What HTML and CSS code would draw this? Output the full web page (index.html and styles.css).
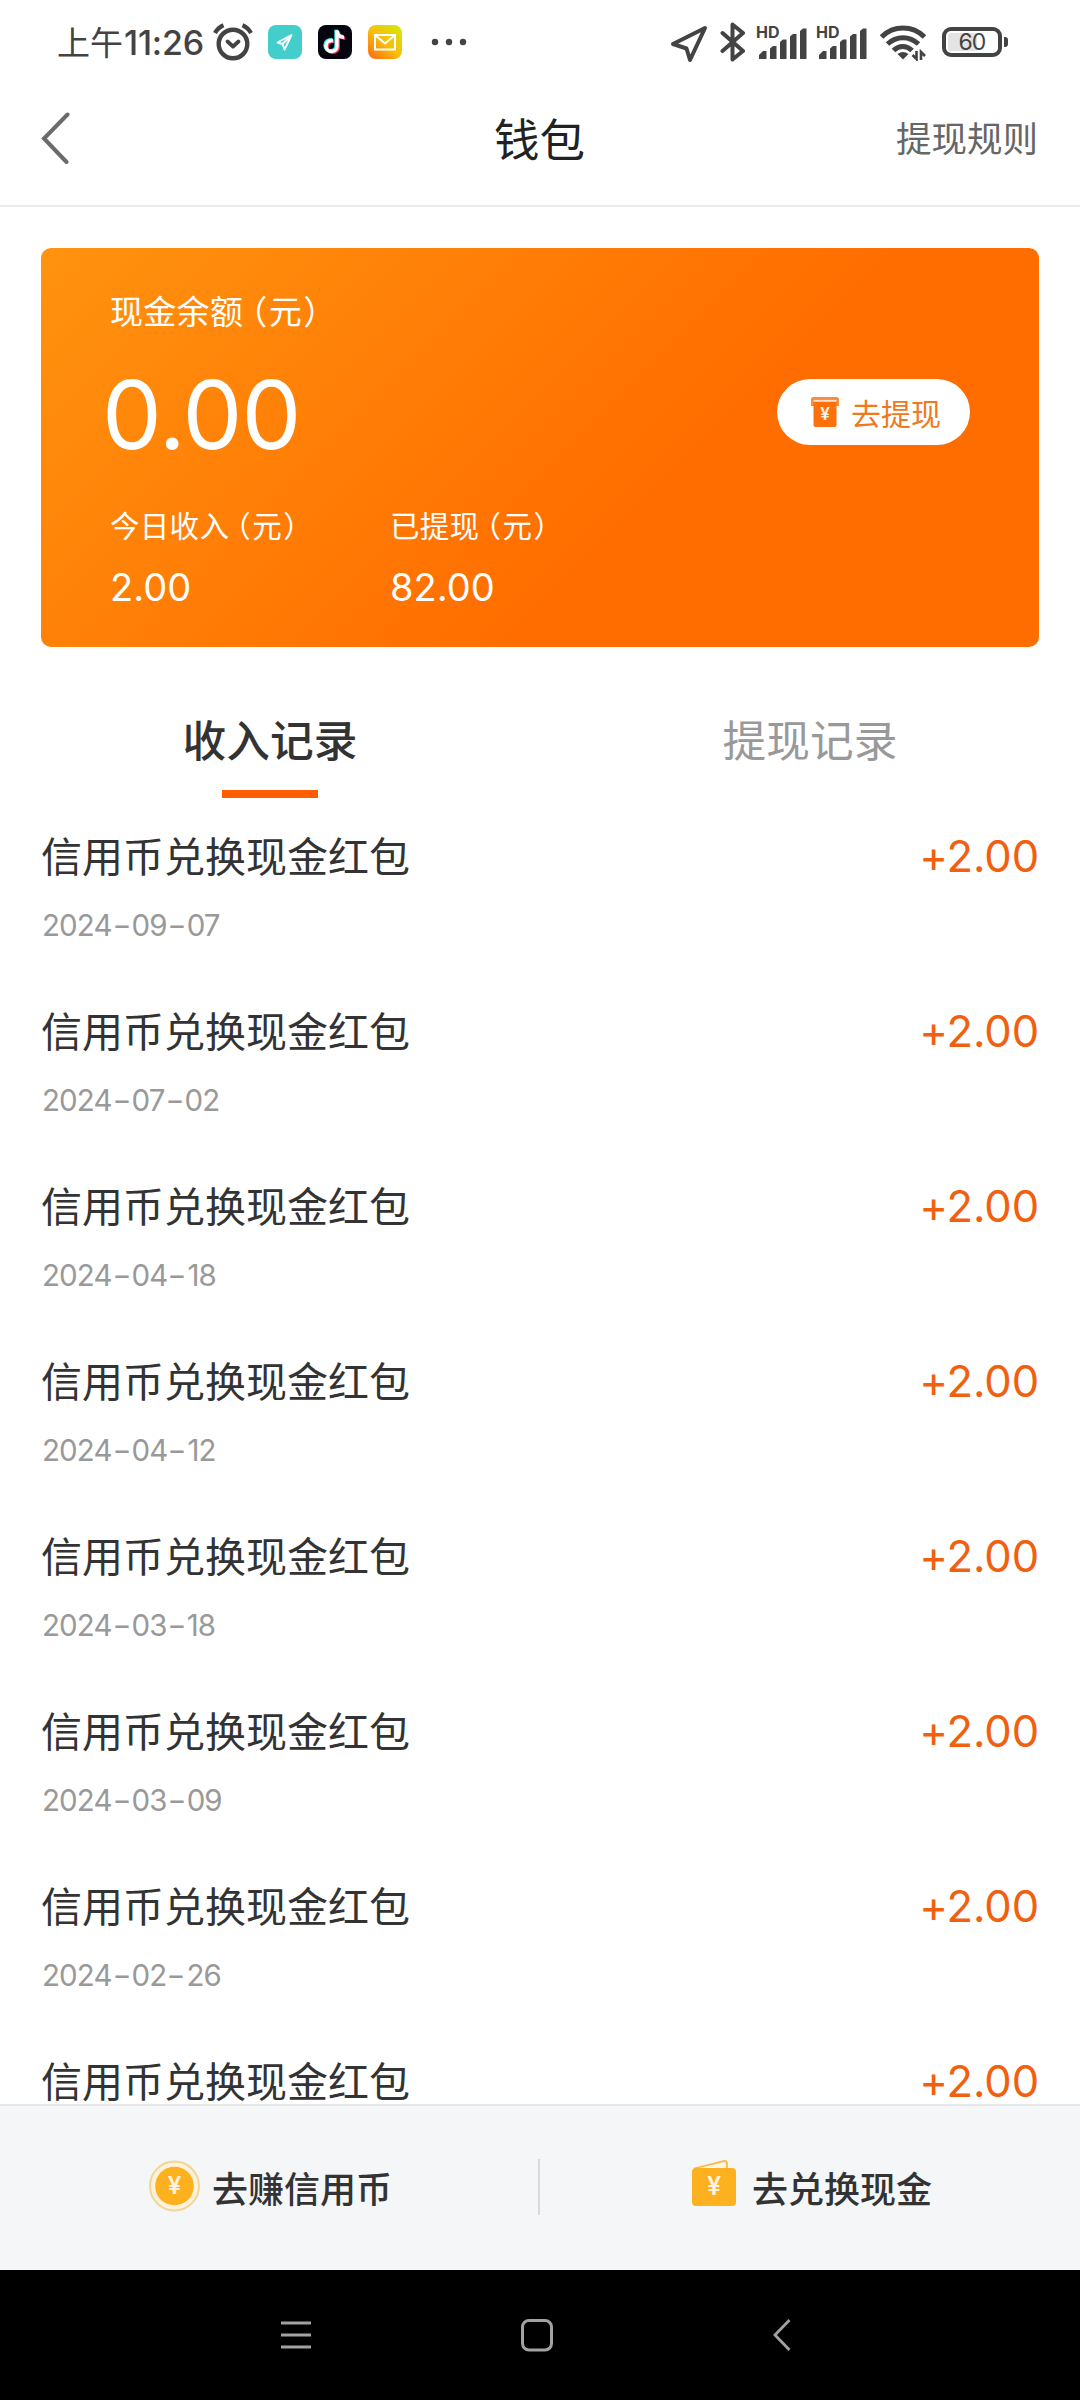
FILE: index.html
```html
<!DOCTYPE html>
<html lang="zh-CN">
<head>
<meta charset="utf-8">
<title>钱包</title>
<link rel="stylesheet" href="styles.css">
</head>
<body>
<div class="screen">
  <div class="status">
    <span class="clock"><span class="clock-cn">上午</span>11:26</span>
    <svg class="alarm" width="40" height="38" viewBox="0 0 40 38" fill="none" stroke="#434343" stroke-linecap="round">
      <circle cx="20" cy="21" r="14.300" stroke-width="4.400"/>
      <path d="M14.500 18.500l5.500 5 5.500-5" stroke-width="3.800" stroke-linejoin="round"/>
      <path d="M2 10q3-5.500 8.500-7.800M38 10q-3-5.500-8.500-7.800" stroke-width="4.200" stroke-linecap="butt"/>
    </svg>
    <svg class="app" width="34" height="34" viewBox="0 0 34 34">
      <rect width="34" height="34" rx="8" fill="#43cecb"/>
      <path d="M23.500 10L9.500 17.500l5 1.500 2 5.500zM14.500 19l9-9" fill="none" stroke="#fff" stroke-width="1.900" stroke-linejoin="round"/>
    </svg>
    <svg class="app" width="34" height="34" viewBox="0 0 34 34">
      <rect width="34" height="34" rx="8" fill="#050510"/>
      <g fill="none" stroke-width="3.400">
        <path d="M15 15.500c-4.500-.500-7 2.200-7 5.500s2.500 5.500 5.500 5.500c3.500 0 5.500-2.500 5.500-5.500V5.500c.500 4 3 6.800 7 6.800" transform="translate(-1 -.8)" stroke="#38e4e4"/>
        <path d="M15 15.500c-4.500-.500-7 2.200-7 5.500s2.500 5.500 5.500 5.500c3.500 0 5.500-2.500 5.500-5.500V5.500c.500 4 3 6.800 7 6.800" transform="translate(1.200 .9)" stroke="#f4386a"/>
        <path d="M15 15.500c-4.500-.500-7 2.200-7 5.500s2.500 5.500 5.500 5.500c3.500 0 5.500-2.500 5.500-5.500V5.500c.500 4 3 6.800 7 6.800" stroke="#fff"/>
      </g>
    </svg>
    <svg class="app" width="34" height="34" viewBox="0 0 34 34">
      <defs><linearGradient id="mail" x1="0" y1="1" x2=".9" y2="0"><stop offset="0" stop-color="#fa6414"/><stop offset=".5" stop-color="#f9bd0a"/><stop offset="1" stop-color="#d4e80a"/></linearGradient></defs>
      <rect width="34" height="34" rx="8" fill="url(#mail)"/>
      <path d="M7 10h20v14.500H7zM7.500 10.500l9.500 8 9.500-8" fill="none" stroke="#fff" stroke-width="2"/>
    </svg>
    <svg class="more" width="36" height="8" viewBox="0 0 36 8" fill="#434343"><circle cx="4" cy="4" r="3.200"/><circle cx="18" cy="4" r="3.200"/><circle cx="32" cy="4" r="3.200"/></svg>
    <svg class="locate" width="38" height="38" viewBox="0 0 38 38"><path d="M35 3L3 19l13.500 4.500L20 35z" fill="none" stroke="#434343" stroke-width="4" stroke-linejoin="round"/></svg>
    <svg class="bluetooth" width="26" height="40" viewBox="0 0 26 40"><path d="M2.500 11L23 29 12.500 37.500V2.500L23 11 2.500 29" fill="none" stroke="#434343" stroke-width="4" stroke-linejoin="round" stroke-linecap="round"/></svg>
    <div class="signal">
      <span class="hd">HD</span>
      <svg width="49" height="31" viewBox="0 0 49 31" fill="#434343"><path d="M0 31v-4l4-4h3.500v8zM11 31V20.500l3-2.500h3.500v13zM21 31V14l3-2.500h3.500V31zM31 31V8.500L34 6h3.500v25zM41 31V3l3-2.500h3.500V31z"/></svg>
    </div>
    <div class="signal">
      <span class="hd">HD</span>
      <svg width="49" height="31" viewBox="0 0 49 31" fill="#434343"><path d="M0 31v-4l4-4h3.500v8zM11 31V20.500l3-2.500h3.500v13zM21 31V14l3-2.500h3.500V31zM31 31V8.500L34 6h3.500v25zM41 31V3l3-2.500h3.500V31z"/></svg>
    </div>
    <svg class="wifi" width="46" height="36" viewBox="0 0 46 36">
      <path d="M1.500 12c12-12 31-12 43 0M7.500 19c9-8.500 22-8.500 31 0M13.500 25.500c5.500-5.500 13-5.500 18.500 0" fill="none" stroke="#434343" stroke-width="5"/>
      <path d="M17.500 29q5.500-4 11 0L23 34.500z" fill="#434343"/>
      <path d="M36.500 26v8l-4-4M41 35v-8l4 4" fill="none" stroke="#434343" stroke-width="2.600"/>
    </svg>
    <div class="battery"><span class="battery-text">60</span></div>
    <span class="nub"></span>
  </div>

  <header class="header">
    <svg class="back" width="30" height="52" viewBox="0 0 30 52"><path d="M26.500 2.500L3 26.500l22.500 23.500" fill="none" stroke="#6b6b6b" stroke-width="4" stroke-linecap="round"/></svg>
    <h1 class="title">钱包</h1>
    <a class="rules">提现规则</a>
  </header>

  <section class="card">
    <p class="label big">现金余额<span class="unit">（元）</span></p>
    <div class="balance">
      <span class="amount-main">0.00</span>
      <button class="withdraw">
        <svg width="30" height="31" viewBox="0 0 30 31">
          <path d="M1 10V3.500Q1 1 3.500 1h23Q29 1 29 3.500V10z" fill="#f98c3c"/>
          <path d="M3.500 4.800h23" stroke="#ffe3cc" stroke-width="1.800"/>
          <path d="M3.500 6h23v23q0 2-2 2h-19q-2 0-2-2z" fill="#fd700c"/>
          <text x="15" y="23.500" text-anchor="middle" class="yen" font-size="17">¥</text>
        </svg>
        去提现
      </button>
    </div>
    <div class="stats">
      <div class="stat"><p class="label">今日收入<span class="unit">（元）</span></p><p class="value">2.00</p></div>
      <div class="stat"><p class="label">已提现<span class="unit">（元）</span></p><p class="value">82.00</p></div>
    </div>
  </section>

  <nav class="tabs">
    <a class="tab active">收入记录</a>
    <a class="tab">提现记录</a>
  </nav>

  <ul class="list">
    <li class="row"><div class="line"><span class="name">信用币兑换现金红包</span><span class="plus">+2.00</span></div><time class="date">2024<span class="dash">-</span>09<span class="dash">-</span>07</time></li>
    <li class="row"><div class="line"><span class="name">信用币兑换现金红包</span><span class="plus">+2.00</span></div><time class="date">2024<span class="dash">-</span>07<span class="dash">-</span>02</time></li>
    <li class="row"><div class="line"><span class="name">信用币兑换现金红包</span><span class="plus">+2.00</span></div><time class="date">2024<span class="dash">-</span>04<span class="dash">-</span>18</time></li>
    <li class="row"><div class="line"><span class="name">信用币兑换现金红包</span><span class="plus">+2.00</span></div><time class="date">2024<span class="dash">-</span>04<span class="dash">-</span>12</time></li>
    <li class="row"><div class="line"><span class="name">信用币兑换现金红包</span><span class="plus">+2.00</span></div><time class="date">2024<span class="dash">-</span>03<span class="dash">-</span>18</time></li>
    <li class="row"><div class="line"><span class="name">信用币兑换现金红包</span><span class="plus">+2.00</span></div><time class="date">2024<span class="dash">-</span>03<span class="dash">-</span>09</time></li>
    <li class="row"><div class="line"><span class="name">信用币兑换现金红包</span><span class="plus">+2.00</span></div><time class="date">2024<span class="dash">-</span>02<span class="dash">-</span>26</time></li>
    <li class="row"><div class="line"><span class="name">信用币兑换现金红包</span><span class="plus">+2.00</span></div></li>
  </ul>

  <footer class="actions">
    <a class="action">
      <svg width="52" height="54" viewBox="0 0 52 54">
        <circle cx="26.500" cy="26" r="24.500" fill="#fdf3dc" stroke="#f3d696" stroke-width="2"/>
        <circle cx="26.500" cy="26" r="19.300" fill="#feb11e"/>
        <text x="26.500" y="34" text-anchor="middle" class="yen" font-size="24">¥</text>
      </svg>
      去赚信用币
    </a>
    <span class="divider"></span>
    <a class="action">
      <svg width="52" height="54" viewBox="0 0 52 54">
        <path d="M6 8.500L36.500 .9q2.500 0 2.500 3V10" fill="#fdf6e4" stroke="#fdbb3c" stroke-width="1.800"/>
        <rect x="4" y="8" width="44" height="38" rx="4" fill="#feb11e"/>
        <text x="26" y="35" text-anchor="middle" class="yen" font-size="25">¥</text>
      </svg>
      去兑换现金
    </a>
  </footer>

  <div class="navbar">
    <svg width="30" height="34" viewBox="0 0 30 34"><path d="M0 5h30M0 17h30M0 29h30" stroke="#a2a2a2" stroke-width="2.800"/></svg>
    <svg width="32" height="34" viewBox="0 0 32 34"><rect x="1.500" y="2.500" width="29" height="29.500" rx="6.500" fill="none" stroke="#a2a2a2" stroke-width="3"/></svg>
    <svg width="18" height="34" viewBox="0 0 18 34"><path d="M16.500 2L2 17l14.500 15" fill="none" stroke="#a2a2a2" stroke-width="2.800"/></svg>
  </div>
</div>
</body>
</html>
```
FILE: styles.css
```css
* { box-sizing: border-box; margin: 0; padding: 0; }

body {
  width: 1080px;
  background: #fff;
  color: #333;
  font-family: "Noto Sans CJK SC", sans-serif;
}

svg { display: block; flex: none; }

.screen {
  display: flex;
  flex-direction: column;
  width: 1080px;
  height: 2400px;
  overflow: hidden;
}

/* Status bar */
.status {
  display: flex;
  align-items: center;
  height: 84px;
  padding-left: 57px;
  color: #434343;
}
.clock {
  display: flex;
  align-items: center;
  width: 156px;
  font: 500 34px/50px "Inter", sans-serif;
  letter-spacing: -.2px;
  white-space: nowrap;
  padding-top: 2px;
}
.clock-cn {
  font: 400 33px/50px "Noto Sans CJK SC", sans-serif;
  letter-spacing: 0;
  margin-top: -4px;
  margin-right: 1px;
}
.alarm { margin-right: 15px; }
.app { margin-right: 16px; }
.more { margin-left: 13px; }
.locate { margin-left: 203px; margin-right: 12px; margin-top: 3px; }
.bluetooth { margin-right: 13px; }
.signal {
  position: relative;
  width: 49px;
  margin-right: 11px;
  padding-top: 3px;
}
.hd {
  position: absolute;
  left: -3px;
  top: -1px;
  font: 700 16px/16px "Inter", sans-serif;
}
.wifi { margin-left: 1px; margin-right: 16px; margin-top: 2px; }
.battery {
  width: 60px;
  height: 30px;
  border: 4px solid #434343;
  border-radius: 9px;
  background: linear-gradient(90deg, #e4e4e4 60%, #fff 60%) content-box;
  padding: 2px;
}
.battery-text {
  display: block;
  text-align: center;
  font: 400 23px/19px "Inter", sans-serif;
  letter-spacing: -1px;
}
.nub {
  width: 4px;
  height: 10px;
  margin-left: 2px;
  border-radius: 0 3px 3px 0;
  background: #434343;
}

/* Header */
.header {
  display: grid;
  grid-template-columns: 1fr auto 1fr;
  align-items: center;
  height: 123px;
  padding: 0 42px 14px 41px;
  border-bottom: 2px solid #ebebeb;
}
.title {
  margin-top: -2px;
  font-weight: 400;
  font-size: 45.500px;
  line-height: 60px;
  color: #222;
}
.rules {
  justify-self: end;
  margin-top: -1px;
  font-size: 35.500px;
  line-height: 60px;
  color: #666;
}

/* Balance card */
.card {
  height: 399px;
  margin: 41px 41px 0;
  padding: 42px 69px 0;
  border-radius: 10px;
  background: linear-gradient(135deg, #ff930f 0%, #ff6d00 62%);
  color: #fff;
}
.label { font-size: 29.500px; line-height: 40px; letter-spacing: .3px; white-space: nowrap; }
.label.big { font-size: 33px; }
.unit { margin-left: -.27em; letter-spacing: 1.500px; }
.balance {
  display: flex;
  justify-content: space-between;
  align-items: center;
  height: 100px;
  margin-top: 34px;
}
.amount-main {
  margin-left: -8px;
  padding-top: 2px;
  font: 400 95px/100px "Inter", sans-serif;
  letter-spacing: -1px;
}
.withdraw {
  display: flex;
  align-items: center;
  gap: 11px;
  width: 193px;
  height: 66px;
  padding-left: 33px;
  margin-bottom: 5px;
  border: 0;
  border-radius: 33px;
  background: #fff;
  color: #f0791f;
  font: 400 30px/46px "Noto Sans CJK SC", sans-serif;
}
.yen { font-family: "Inter", sans-serif; font-weight: 600; fill: #fff3e0; }
.stats {
  display: grid;
  grid-template-columns: 280px 1fr;
  margin-top: 40px;
}
.value {
  margin-top: 18px;
  font: 400 38px/50px "Inter", sans-serif;
}

/* Tabs */
.tabs {
  display: grid;
  grid-template-columns: 1fr 1fr;
  height: 173px;
  padding-top: 61px;
}
.tab {
  display: flex;
  flex-direction: column;
  align-items: center;
  font-size: 43.700px;
  line-height: 60px;
  color: #999;
}
.tab.active { color: #333; font-weight: 500; }
.tab.active::after {
  content: "";
  width: 96px;
  height: 8px;
  margin-top: 22px;
  background: #ff5d05;
}

/* Records */
.list {
  height: 1284px;
  overflow: hidden;
  list-style: none;
}
.row { height: 175px; padding: 0 41px; }
.line { display: flex; justify-content: space-between; }
.name { font-size: 41px; line-height: 68px; }
.plus {
  padding-top: 2px;
  font: 400 43.500px/68px "Inter", sans-serif;
  letter-spacing: -.1px;
  color: #f0600f;
}
.date {
  display: block;
  margin-top: 15px;
  padding-left: 1px;
  font: 400 29.500px/40px "Inter", sans-serif;
  letter-spacing: -.9px;
  color: #999;
}
.dash {
  display: inline-block;
  width: 20px;
  text-align: center;
  letter-spacing: 0;
  transform: scaleX(1.4);
}

/* Bottom actions */
.actions {
  display: flex;
  align-items: center;
  height: 166px;
  padding-bottom: 2px;
  border-top: 2px solid #e6e7e9;
  background: #f4f6f8;
}
.action {
  flex: 1;
  display: flex;
  align-items: center;
  justify-content: center;
  gap: 12px;
  font-size: 36px;
  font-weight: 500;
  line-height: 54px;
}
.divider { width: 2px; height: 56px; margin: 0 0 0 -2px; background: #d9dadc; }

/* System navigation */
.navbar {
  display: flex;
  align-items: center;
  height: 130px;
  padding-left: 281px;
  background: #000;
}
.navbar svg + svg { margin-left: 210px; }
.navbar svg + svg + svg { margin-left: 220px; }
```
